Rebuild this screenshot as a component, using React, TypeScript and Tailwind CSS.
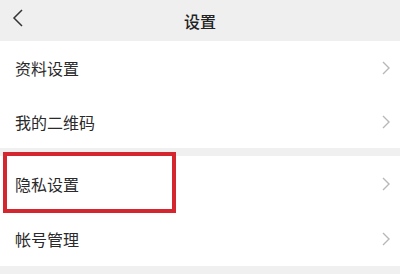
import React from "react";

function Chevron() {
  return (
    <svg width="8" height="14" viewBox="0 0 8 14" className="shrink-0">
      <polyline points="1,1 7,7 1,13" fill="none" stroke="#b8b8b8" strokeWidth="1.4" />
    </svg>
  );
}

function Row({ label, h }: { label: string; h: string }) {
  return (
    <div className={`flex ${h} items-center justify-between bg-white pl-[15px] pr-[10px]`}>
      <span className="text-[16px] text-[#2a2a2a]">{label}</span>
      <Chevron />
    </div>
  );
}

export default function App() {
  return (
    <div
      className="relative h-[274px] w-[400px] overflow-hidden bg-[#f0f0f0]"
      style={{ fontFamily: '"Noto Sans CJK SC", "Noto Sans", sans-serif' }}
    >
      <div className="relative flex h-[41px] items-center justify-center bg-[#efefef]">
        <svg width="12" height="18" viewBox="0 0 12 18" className="absolute left-[12px] top-[9px]">
          <polyline points="10,1 2,9 10,17" fill="none" stroke="#333" strokeWidth="1.5" />
        </svg>
        <span className="text-[16px] font-medium text-[#222]">设置</span>
      </div>
      <div className="flex flex-col">
        <Row label="资料设置" h="h-[54px]" />
        <Row label="我的二维码" h="h-[53px]" />
        <div className="h-[8px] bg-[#f0f0f0]" />
        <Row label="隐私设置" h="h-[56px]" />
        <Row label="帐号管理" h="h-[54px]" />
      </div>
      <div className="absolute left-[3px] top-[152px] h-[61px] w-[173px] border-[4px] border-[#d3262e]" />
    </div>
  );
}
